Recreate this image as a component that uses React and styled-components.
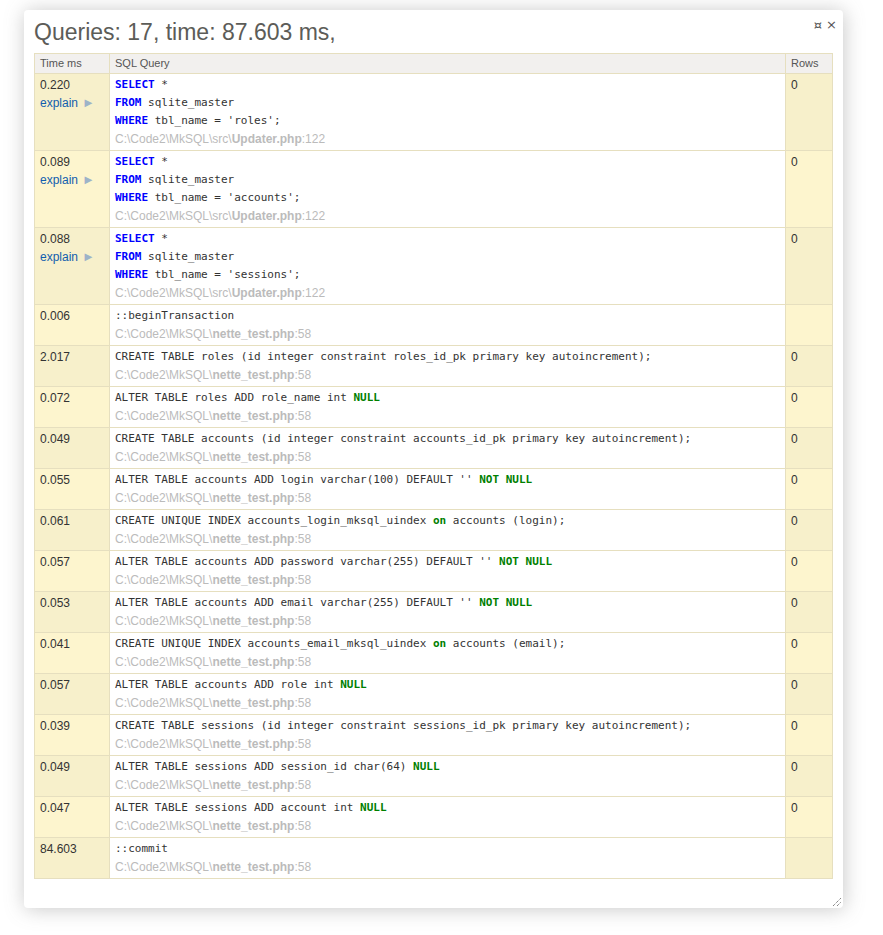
import React from 'react'
import styled, { createGlobalStyle } from 'styled-components'

const GlobalStyle = createGlobalStyle`
  html, body {
    margin: 0;
    padding: 0;
    background: #fff;
  }
  body {
    min-height: 100vh;
    font-family: "Liberation Sans", Arial, sans-serif;
  }
  #root {
    padding: 10px 0 27px 24px;
  }
`;

// b = blue keyword, g = green keyword
const kw = (t) => ({ k: 'b', t })
const gr = (t) => ({ k: 'g', t })

const selectOf = (name) => [
  [kw('SELECT'), ' *'],
  [kw('FROM'), ' sqlite_master'],
  [kw('WHERE'), ` tbl_name = '${name}';`],
]

const UPDATER = { dir: 'C:\\Code2\\MkSQL\\src\\', file: 'Updater.php', line: 122 }
const TEST = { dir: 'C:\\Code2\\MkSQL\\', file: 'nette_test.php', line: 58 }

const queries = [
  { time: '0.220', explain: true, sql: selectOf('roles'), src: UPDATER, rows: '0' },
  { time: '0.089', explain: true, sql: selectOf('accounts'), src: UPDATER, rows: '0' },
  { time: '0.088', explain: true, sql: selectOf('sessions'), src: UPDATER, rows: '0' },
  { time: '0.006', sql: [['::beginTransaction']], src: TEST, rows: '' },
  { time: '2.017', sql: [['CREATE TABLE roles (id integer constraint roles_id_pk primary key autoincrement);']], src: TEST, rows: '0' },
  { time: '0.072', sql: [['ALTER TABLE roles ADD role_name int ', gr('NULL')]], src: TEST, rows: '0' },
  { time: '0.049', sql: [['CREATE TABLE accounts (id integer constraint accounts_id_pk primary key autoincrement);']], src: TEST, rows: '0' },
  { time: '0.055', sql: [["ALTER TABLE accounts ADD login varchar(100) DEFAULT '' ", gr('NOT NULL')]], src: TEST, rows: '0' },
  { time: '0.061', sql: [['CREATE UNIQUE INDEX accounts_login_mksql_uindex ', gr('on'), ' accounts (login);']], src: TEST, rows: '0' },
  { time: '0.057', sql: [["ALTER TABLE accounts ADD password varchar(255) DEFAULT '' ", gr('NOT NULL')]], src: TEST, rows: '0' },
  { time: '0.053', sql: [["ALTER TABLE accounts ADD email varchar(255) DEFAULT '' ", gr('NOT NULL')]], src: TEST, rows: '0' },
  { time: '0.041', sql: [['CREATE UNIQUE INDEX accounts_email_mksql_uindex ', gr('on'), ' accounts (email);']], src: TEST, rows: '0' },
  { time: '0.057', sql: [['ALTER TABLE accounts ADD role int ', gr('NULL')]], src: TEST, rows: '0' },
  { time: '0.039', sql: [['CREATE TABLE sessions (id integer constraint sessions_id_pk primary key autoincrement);']], src: TEST, rows: '0' },
  { time: '0.049', sql: [['ALTER TABLE sessions ADD session_id char(64) ', gr('NULL')]], src: TEST, rows: '0' },
  { time: '0.047', sql: [['ALTER TABLE sessions ADD account int ', gr('NULL')]], src: TEST, rows: '0' },
  { time: '84.603', sql: [['::commit']], src: TEST, rows: '' },
]

const App = () => {
  return (
    <>
      <GlobalStyle />
      <Panel>
        <Icons>
          <IconLink>¤</IconLink>
          <IconLink>×</IconLink>
        </Icons>
        <Title>Queries: 17, time: 87.603 ms,</Title>
        <Table>
          <colgroup>
            <col style={{ width: 75 }} />
            <col />
            <col style={{ width: 47 }} />
          </colgroup>
          <tbody>
            <tr>
              <Th>Time ms</Th>
              <Th>SQL Query</Th>
              <Th>Rows</Th>
            </tr>
            {queries.map((q, i) => (
              <tr key={i}>
                <Td $dark={i % 2 === 0}>
                  <Line>{q.time}</Line>
                  {q.explain && (
                    <Line>
                      <Explain>explain</Explain>
                      <Arrow>►</Arrow>
                    </Line>
                  )}
                </Td>
                <SqlTd>
                  {q.sql.map((line, j) => (
                    <Code key={j}>
                      {line.map((part, k) =>
                        typeof part === 'string' ? (
                          <React.Fragment key={k}>{part}</React.Fragment>
                        ) : (
                          <Keyword key={k} $tone={part.k}>{part.t}</Keyword>
                        )
                      )}
                    </Code>
                  ))}
                  <Source>
                    {q.src.dir}
                    <b>{q.src.file}</b>:{q.src.line}
                  </Source>
                </SqlTd>
                <Td $dark={i % 2 === 0}>
                  <Line>{q.rows}</Line>
                </Td>
              </tr>
            ))}
          </tbody>
        </Table>
        <Grip width="10" height="10" viewBox="0 0 10 10">
          <path d="M1 9 L9 1 M5 9 L9 5" stroke="#555" strokeWidth="1" strokeDasharray="1 1" />
        </Grip>
      </Panel>
    </>
  )
}

const Panel = styled.div`
  position: relative;
  width: 799px;
  padding: 6px 10px 29px;
  background: #fff;
  border-radius: 4px;
  box-shadow: 1px 1px 20px rgba(102, 102, 102, 0.36);
  color: #333;
`;

const Icons = styled.div`
  position: absolute;
  top: 7px;
  right: 6px;
  display: flex;
  gap: 4px;
  font-family: "DejaVu Sans", sans-serif;
  font-size: 13px;
  line-height: 16px;
`;

const IconLink = styled.span`
  color: #555;
  cursor: pointer;
`;

const Title = styled.h1`
  margin: 0 0 5px;
  font: normal 23px/32px "Liberation Sans", Arial, sans-serif;
  color: #5c5c58;
`;

const Table = styled.table`
  width: 799px;
  border-collapse: collapse;
  table-layout: fixed;
  font-size: 12px;
`;

const Th = styled.th`
  border: 1px solid #e6dfbf;
  background: #f2f0ee;
  padding: 2px 5px;
  font-size: 11px;
  line-height: 15px;
  font-weight: normal;
  text-align: left;
  color: #555;
`;

const Td = styled.td`
  border: 1px solid #e6dfbf;
  background: ${(p) => (p.$dark ? '#f7f0cb' : '#fdf5ce')};
  padding: 2px 5px;
  vertical-align: top;
  line-height: 18px;
  color: #333;
`;

const SqlTd = styled(Td)`
  background: #fff;
`;

const Line = styled.div`
  height: 18px;
  white-space: nowrap;
`;

const Explain = styled.a`
  color: #125eae;
  cursor: pointer;
`;

const Arrow = styled.span`
  margin-left: 4px;
  font-size: 13px;
  color: #9db3c8;
`;

const Code = styled.div`
  height: 18px;
  font-family: "DejaVu Sans Mono", monospace;
  font-size: 11px;
  color: #333;
  white-space: pre;
`;

const Keyword = styled.strong`
  color: ${(p) => (p.$tone === 'g' ? 'green' : 'blue')};
`;

const Source = styled.div`
  height: 18px;
  color: #bbb;
  white-space: nowrap;
`;

const Grip = styled.svg`
  position: absolute;
  right: 1px;
  bottom: 1px;
`;

export default App
